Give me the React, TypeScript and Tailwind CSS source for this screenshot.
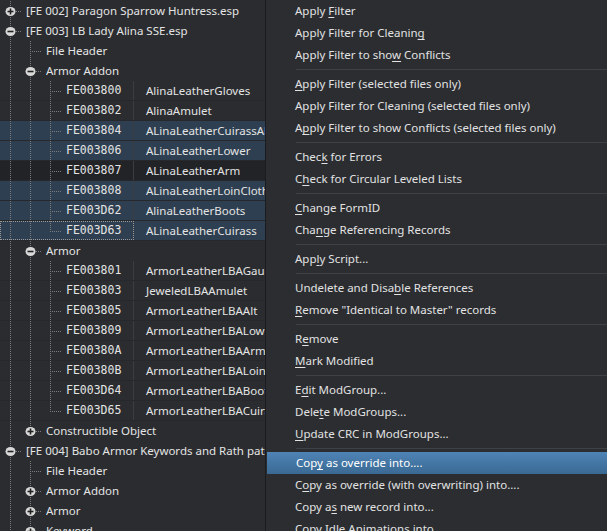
import React from "react";

type G = "full" | "top" | "none";

interface TreeRow {
  lv: 0 | 1 | 2;
  g: G[];
  icon?: "plus" | "minus";
  text?: string;
  id?: string;
  name?: string;
  sel?: boolean;
  dark?: boolean;
  focus?: boolean;
}

const F = "full";

const rows: TreeRow[] = [
  { lv: 0, g: [F], icon: "plus", text: "[FE 002] Paragon Sparrow Huntress.esp" },
  { lv: 0, g: [F], icon: "minus", text: "[FE 003] LB Lady Alina SSE.esp" },
  { lv: 1, g: [F, F], text: "File Header" },
  { lv: 1, g: [F, F], icon: "minus", text: "Armor Addon" },
  { lv: 2, g: [F, F, F], id: "FE003800", name: "AlinaLeatherGloves" },
  { lv: 2, g: [F, F, F], id: "FE003802", name: "AlinaAmulet" },
  { lv: 2, g: [F, F, F], id: "FE003804", name: "ALinaLeatherCuirassAlt", sel: true },
  { lv: 2, g: [F, F, F], id: "FE003806", name: "ALinaLeatherLower", sel: true },
  { lv: 2, g: [F, F, F], id: "FE003807", name: "ALinaLeatherArm", dark: true },
  { lv: 2, g: [F, F, F], id: "FE003808", name: "ALinaLeatherLoinCloth", sel: true },
  { lv: 2, g: [F, F, F], id: "FE003D62", name: "AlinaLeatherBoots", sel: true },
  { lv: 2, g: [F, F, "top"], id: "FE003D63", name: "ALinaLeatherCuirass", sel: true, focus: true },
  { lv: 1, g: [F, F], icon: "minus", text: "Armor" },
  { lv: 2, g: [F, F, F], id: "FE003801", name: "ArmorLeatherLBAGauntlets" },
  { lv: 2, g: [F, F, F], id: "FE003803", name: "JeweledLBAAmulet" },
  { lv: 2, g: [F, F, F], id: "FE003805", name: "ArmorLeatherLBAAlt" },
  { lv: 2, g: [F, F, F], id: "FE003809", name: "ArmorLeatherLBALower" },
  { lv: 2, g: [F, F, F], id: "FE00380A", name: "ArmorLeatherLBAArm" },
  { lv: 2, g: [F, F, F], id: "FE00380B", name: "ArmorLeatherLBALoinCloth" },
  { lv: 2, g: [F, F, F], id: "FE003D64", name: "ArmorLeatherLBABoots" },
  { lv: 2, g: [F, F, "top"], id: "FE003D65", name: "ArmorLeatherLBACuirass" },
  { lv: 1, g: [F, "top"], icon: "plus", text: "Constructible Object" },
  { lv: 0, g: [F], icon: "minus", text: "[FE 004] Babo Armor Keywords and Rath patch.esp" },
  { lv: 1, g: [F, F], text: "File Header" },
  { lv: 1, g: [F, F], icon: "plus", text: "Armor Addon" },
  { lv: 1, g: [F, F], icon: "plus", text: "Armor" },
  { lv: 1, g: [F, F], icon: "plus", text: "Keyword" },
];

const menu: (string | null)[] = [
  "Apply &Filter",
  "Apply Filter for Cleanin&g",
  "Apply Filter to sho&w Conflicts",
  null,
  "&Apply Filter (selected files only)",
  "Apply Filter for Cleaning (selected files only)",
  "A&pply Filter to show Conflicts (selected files only)",
  null,
  "Chec&k for Errors",
  "C&heck for Circular Leveled Lists",
  null,
  "&Change FormID",
  "Cha&nge Referencing Records",
  null,
  "App&ly Script...",
  null,
  "Undelete and Disa&ble References",
  "&Remove \"Identical to Master\" records",
  null,
  "R&emove",
  "&Mark Modified",
  null,
  "E&dit ModGroup...",
  "Dele&te ModGroups...",
  "&Update CRC in ModGroups...",
  null,
  "Cop&y as override into....",
  "C&opy as override (with overwriting) into....",
  "Copy a&s new record into...",
  "Copy Idle Animations into...",
];

const ui = { fontFamily: '"Noto Sans", "Open Sans", sans-serif' };
const mono = { fontFamily: '"DejaVu Sans Mono", "Liberation Mono", monospace' };

function Guides({ row }: { row: TreeRow }) {
  const w = 26 + 20 * row.lv;
  const cx = 10 + 20 * row.lv;
  return (
    <svg width={w} height={20} className="shrink-0" shapeRendering="crispEdges">
      {row.g.map((s, c) =>
        s === "none" ? null : (
          <line
            key={c}
            x1={10.5 + 20 * c}
            x2={10.5 + 20 * c}
            y1={0}
            y2={s === "full" ? 20 : 10}
            stroke="#7a7c80"
            strokeDasharray="1 1"
          />
        )
      )}
      <line x1={cx} x2={cx + 12} y1={10.5} y2={10.5} stroke="#7a7c80" strokeDasharray="1 1" />
      {row.icon && (
        <g shapeRendering="auto">
          <ellipse cx={cx + 0.5} cy={10.5} rx={5} ry={4.6} fill="#d9d9d9" />
          <line x1={cx - 2.5} x2={cx + 3.5} y1={10.5} y2={10.5} stroke="#222" strokeWidth={1.6} />
          {row.icon === "plus" && (
            <line x1={cx + 0.5} x2={cx + 0.5} y1={7.5} y2={13.5} stroke="#222" strokeWidth={1.6} />
          )}
        </g>
      )}
    </svg>
  );
}

function TreeLine({ row }: { row: TreeRow }) {
  const bg = row.sel ? "bg-[#2e3f51]" : row.dark ? "bg-[#222327]" : "bg-[#2a2c30]";
  if (!row.id) {
    return (
      <div className={`flex h-[20px] items-center whitespace-nowrap ${bg}`}>
        <Guides row={row} />
        <span className="text-[11.5px] text-[#e4e4e4]">{row.text}</span>
      </div>
    );
  }
  return (
    <div className={`flex h-[20px] items-center whitespace-nowrap border-b border-[#26282c] ${bg}`}>
      <div
        className={`flex h-full w-[134px] shrink-0 items-center border-r border-[#3a3d42] ${
          row.focus ? "outline-1 outline-dotted outline-[#9a9a9a] -outline-offset-1" : ""
        }`}
      >
        <Guides row={row} />
        <span className="text-[11.5px] text-[#e4e4e4]" style={mono}>
          {row.id}
        </span>
      </div>
      <span className="pl-[12px] text-[11.5px] text-[#e4e4e4]">{row.name}</span>
    </div>
  );
}

function Label({ text }: { text: string }) {
  const i = text.indexOf("&");
  if (i < 0) return <span>{text}</span>;
  return (
    <span>
      {text.slice(0, i)}
      <span className="underline underline-offset-2">{text[i + 1]}</span>
      {text.slice(i + 2)}
    </span>
  );
}

export default function App() {
  return (
    <div className="flex h-[531px] w-[607px] overflow-hidden bg-[#2a2c30]" style={ui}>
      <div className="w-[265px] shrink-0 overflow-hidden pt-[1px]">
        {rows.map((r, i) => (
          <TreeLine key={i} row={r} />
        ))}
      </div>
      <div className="flex-1 overflow-hidden border-l border-[#1b1c1f] bg-[#2b2d31]">
        {menu.map((m, i) =>
          m === null ? (
            <div key={i} className="flex h-[7px] items-center">
              <div className="ml-[30px] h-px flex-1 bg-[#3e4146]" />
            </div>
          ) : (
            <div
              key={i}
              className={`flex h-[22px] items-center whitespace-nowrap pl-[29px] text-[11.5px] ${
                i === 26
                  ? "ml-[1px] bg-gradient-to-b from-[#4f84b6] to-[#3a6993] text-white"
                  : "text-[#e2e2e2]"
              }`}
            >
              <Label text={m} />
            </div>
          )
        )}
      </div>
    </div>
  );
}
